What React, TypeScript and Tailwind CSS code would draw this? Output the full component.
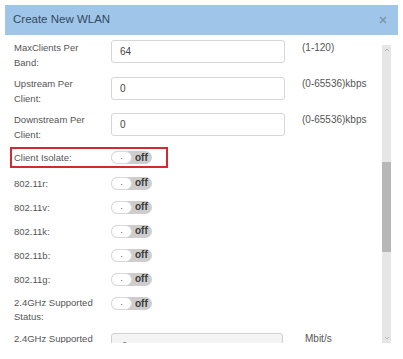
const font = { fontFamily: '"Liberation Sans", Arial, sans-serif' };

const labelCls = "w-[97px] shrink-0 text-[9.5px] leading-[15px] text-[#555]";
const noteCls = "ml-[17px] text-[10px] leading-[15px] text-[#555]";

const TextRow = ({ lines, value, note, h, inputTop }: { lines: string[]; value: string; note: string; h: string; inputTop: string }) => (
  <div className={`flex items-start ${h}`}>
    <div className={labelCls}>
      {lines.map((l) => (
        <div key={l}>{l}</div>
      ))}
    </div>
    <div className={`flex h-[23px] w-[174px] shrink-0 items-center rounded-[3px] border border-[#d6d6d6] px-[8px] text-[10px] text-[#444] ${inputTop}`}>
      {value}
    </div>
    <div className={noteCls}>{note}</div>
  </div>
);

const Toggle = () => (
  <div className="flex h-[13px] w-[41px] shrink-0 items-center rounded-full bg-[#cdcdcd]">
    <div className="flex h-[13px] w-[21px] items-start justify-center rounded-full border border-[#d9d9d9] bg-white text-[9px] leading-[8px] text-[#555]">
      .
    </div>
    <span className="ml-[3px] text-[10px] font-semibold leading-none text-[#3a3a3a]">off</span>
  </div>
);

const ToggleRow = ({ label }: { label: string }) => (
  <div className="flex h-[24px] items-center">
    <div className={labelCls}>{label}</div>
    <Toggle />
  </div>
);

export default function App() {
  return (
    <div className="h-[359px] w-[403px] overflow-hidden bg-white px-[5px] pt-[5px]" style={font}>
      <div className="flex h-[30px] items-center justify-between bg-[#9fc5e8] pl-[8px] pr-[11px]">
        <span className="text-[11.5px] text-[#34495e]">Create New WLAN</span>
        <svg width="8" height="8" viewBox="0 0 8 8" className="text-[#7d92a8]">
          <path d="M1 1L7 7M7 1L1 7" stroke="currentColor" strokeWidth="1.4" />
        </svg>
      </div>

      <div className="flex h-[308px] overflow-hidden">
        <div className="flex-1 pl-[9px] pt-[5px]">
          <TextRow lines={["MaxClients Per", "Band:"]} value="64" note="(1-120)" h="h-[36px]" inputTop="" />
          <TextRow lines={["Upstream Per", "Client:"]} value="0" note="(0-65536)kbps" h="h-[36px]" inputTop="mt-[1px]" />
          <TextRow lines={["Downstream Per", "Client:"]} value="0" note="(0-65536)kbps" h="h-[35px]" inputTop="mt-[1px]" />

          <div className="-ml-[4px] flex h-[21px] w-[158px] items-center border-2 border-[#d42a2f] pl-[2px]">
            <div className={labelCls}>Client Isolate:</div>
            <Toggle />
          </div>

          <div className="mt-[3px]">
            <ToggleRow label="802.11r:" />
            <ToggleRow label="802.11v:" />
            <ToggleRow label="802.11k:" />
            <ToggleRow label="802.11b:" />
            <ToggleRow label="802.11g:" />
          </div>

          <div className="flex h-[34px] items-start pt-[5px]">
            <div className="w-[97px] shrink-0 text-[9.5px] leading-[14px] text-[#555]">
              <div>2.4GHz Supported</div>
              <div>Status:</div>
            </div>
            <div className="mt-[1px]">
              <Toggle />
            </div>
          </div>

          <div className="flex items-start">
            <div className="w-[97px] shrink-0 pt-[7px] text-[9.5px] leading-[14px] text-[#555]">2.4GHz Supported</div>
            <div className="mt-[8px] flex h-[23px] w-[172px] shrink-0 items-start justify-between rounded-[3px] border border-[#d0d0d0] bg-[#f4f4f4] px-[10px] pt-[3px] text-[10px] text-[#777]">
              <span>c</span>
              <span className="text-[9px] text-[#aaa]">⌄⌄</span>
            </div>
            <div className="ml-[22px] pt-[7px] text-[10px] leading-[14px] text-[#555]">Mbit/s</div>
          </div>
        </div>

        <div className="mr-[7px] mt-[10px] flex w-[9px] flex-col items-center bg-[#e6e6e6]">
          <svg width="6" height="4" viewBox="0 0 6 4" className="mt-[3px] text-[#aaa]">
            <path d="M1 3L3 1L5 3" fill="none" stroke="currentColor" strokeWidth="0.8" />
          </svg>
          <div className="mt-[110px] h-[90px] w-[9px] bg-[#b7b7b7]" />
          <div className="flex-1" />
          <svg width="6" height="4" viewBox="0 0 6 4" className="mb-[3px] text-[#aaa]">
            <path d="M1 1L3 3L5 1" fill="none" stroke="currentColor" strokeWidth="0.8" />
          </svg>
        </div>
      </div>
    </div>
  );
}
